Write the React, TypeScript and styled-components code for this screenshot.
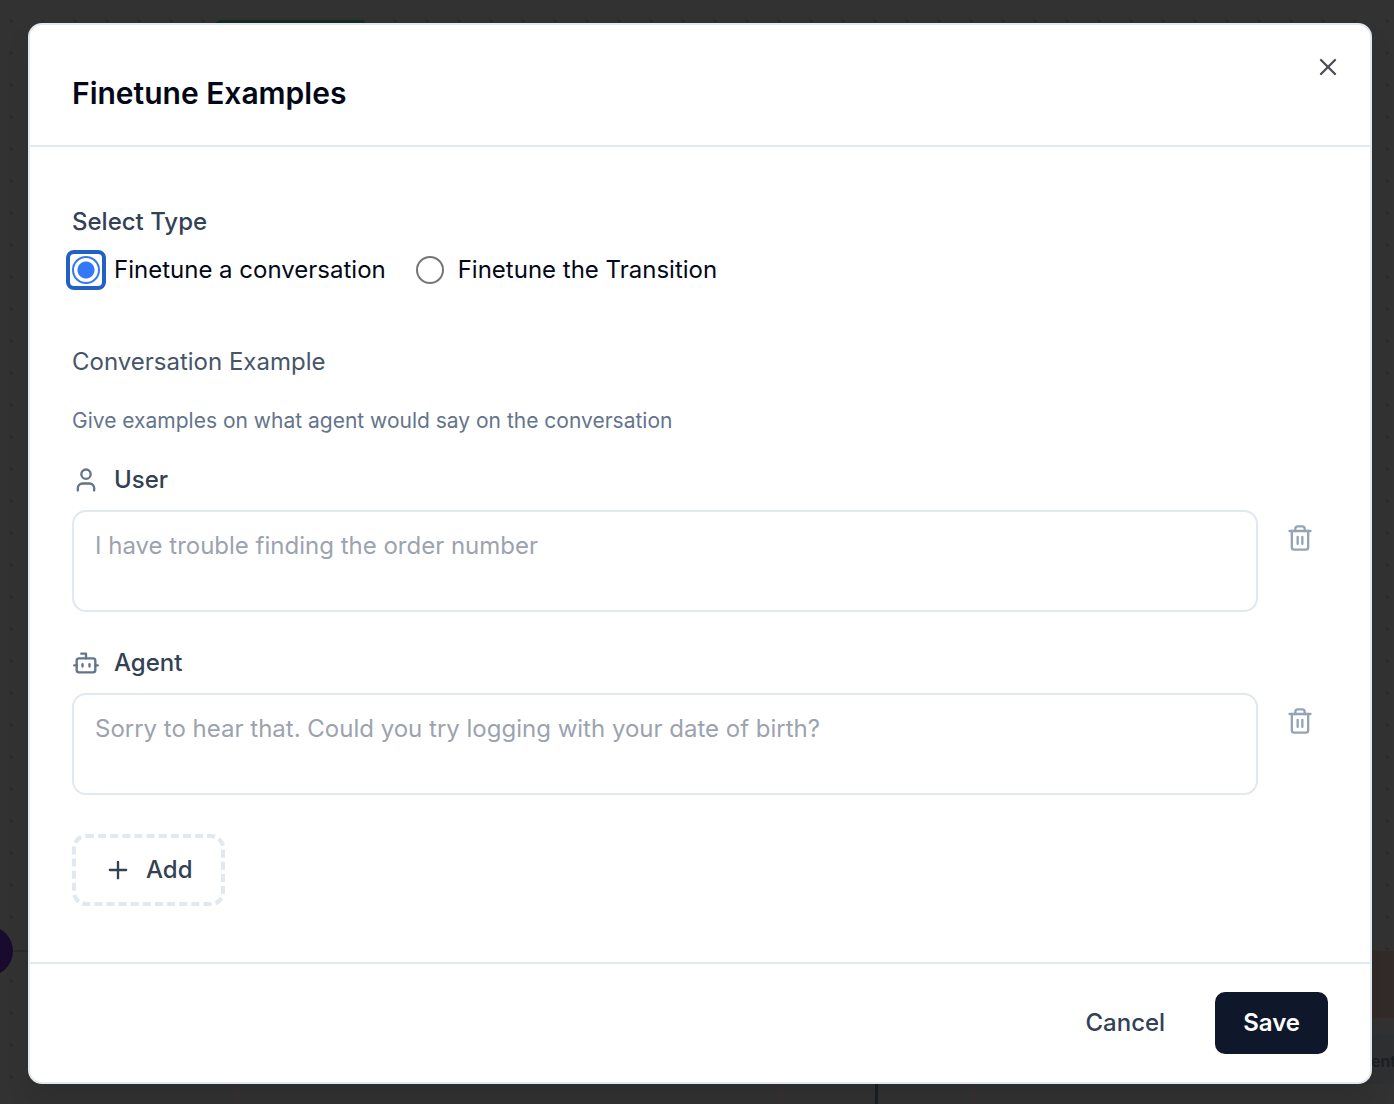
import React, { useState } from "react";
import styled, { createGlobalStyle } from "styled-components";
import { Bot, Plus, Trash2, User, X } from "lucide-react";

const GlobalStyle = createGlobalStyle`
  *, *::before, *::after { box-sizing: border-box; }
  body {
    margin: 0;
    background: #323232;
    color: #020817;
    font-family: Inter, "Liberation Sans", sans-serif;
    font-size: 24px;
    line-height: 36px;
  }
  button, input, textarea { font: inherit; color: inherit; margin: 0; }
  h2, h3, p, fieldset, legend { margin: 0; padding: 0; border: 0; }
`;

const Page = styled.div`
  position: relative;
  min-height: 100vh;
  display: flex;
  align-items: center;
  padding: 22px 22px 20px 28px;
  overflow: hidden;
`;

const FlowCanvas = styled.div`
  position: absolute;
  inset: 0;
  background-image: radial-gradient(circle, #2b2b2b 1px, transparent 2px);
  background-size: 32px 32px;
  background-position: -5px 5px;
`;

const Shape = styled.div<{ $x: number; $y: number; $w: number; $h: number; $color: string; $radius?: number }>`
  position: absolute;
  left: ${(p) => p.$x}px;
  top: ${(p) => p.$y}px;
  width: ${(p) => p.$w}px;
  height: ${(p) => p.$h}px;
  background: ${(p) => p.$color};
  border-radius: ${(p) => p.$radius ?? 0}px;
`;

const NodeLabel = styled.span`
  position: absolute;
  left: 1371px;
  top: 1049px;
  font-size: 16px;
  line-height: 24px;
  font-weight: 600;
  color: #1c1f22;
`;

const Dialog = styled.section`
  position: relative;
  flex: 1;
  min-width: 0;
  background: #fff;
  border: 2px solid #e2e8f0;
  border-radius: 14px;
  box-shadow: 0 16px 24px rgba(0, 0, 0, 0.1);
`;

const Header = styled.header`
  padding: 52px 42px 36px;
  border-bottom: 2px solid #e2e8f0;
`;

const Title = styled.h2`
  font-size: 30px;
  line-height: 32px;
  font-weight: 600;
`;

const IconButton = styled.button`
  display: flex;
  align-items: center;
  justify-content: center;
  flex: none;
  width: 56px;
  height: 56px;
  padding: 0;
  border: 0;
  background: none;
  color: #94a3b8;
  cursor: pointer;
`;

const CloseButton = styled(IconButton)`
  position: absolute;
  top: 14px;
  right: 14px;
  color: #4b4e57;
`;

const Body = styled.div`
  padding: 57px 42px 56px;
`;

const TypeGroup = styled.fieldset`
  min-width: 0;
  margin-bottom: 56px;
`;

const Legend = styled.legend`
  margin-bottom: 12px;
  color: #334155;
  font-weight: 500;
`;

const Options = styled.div`
  display: flex;
  flex-wrap: wrap;
  gap: 30px;
`;

const Option = styled.label`
  display: flex;
  align-items: center;
  gap: 14px;
`;

const RadioFrame = styled.span`
  display: flex;
  border-radius: 2px;

  &:has(input:checked) {
    outline: 4px solid #2360c5;
    outline-offset: 2px;
  }
`;

const Radio = styled.input`
  appearance: none;
  width: 28px;
  height: 28px;
  border: 2px solid #767676;
  border-radius: 50%;
  outline: none;

  &:checked {
    border-color: #3478f6;
    background: radial-gradient(circle, #3478f6 8px, #fff 9px);
  }
`;

const SectionTitle = styled.h3`
  margin-bottom: 27px;
  font-size: 24px;
  font-weight: 400;
  color: #475569;
`;

const Hint = styled.p`
  margin-bottom: 27px;
  font-size: 21px;
  line-height: 28px;
  color: #64748b;
`;

const Turn = styled.div`
  margin-bottom: 33px;
`;

const TurnLabel = styled.label`
  display: flex;
  align-items: center;
  gap: 14px;
  margin-bottom: 12px;
  font-weight: 500;
  color: #334155;

  svg { color: #64748b; }
`;

const TurnRow = styled.div`
  display: flex;
  align-items: flex-start;
  gap: 14px;
`;

const Message = styled.textarea`
  display: block;
  flex: 1;
  min-width: 0;
  height: 102px;
  padding: 16px 21px;
  border: 2px solid #e2e8f0;
  border-radius: 14px;
  background: #fff;
  resize: none;
  outline: none;

  &::placeholder { color: #9ca3af; opacity: 1; }
`;

const AddButton = styled.button`
  display: flex;
  align-items: center;
  gap: 14px;
  margin-top: 39px;
  padding: 14px 28px;
  border: 4px dashed #e2e8f0;
  border-radius: 14px;
  background: #fff;
  color: #334155;
  font-weight: 500;
  cursor: pointer;
`;

const Footer = styled.footer`
  display: flex;
  justify-content: flex-end;
  gap: 22px;
  padding: 28px 42px;
  border-top: 2px solid #e2e8f0;
`;

const ActionButton = styled.button<{ $primary?: boolean }>`
  padding: 13px 28px;
  border: 0;
  border-radius: 10px;
  background: ${(p) => (p.$primary ? "#0f172a" : "transparent")};
  color: ${(p) => (p.$primary ? "#fff" : "#334155")};
  font-weight: ${(p) => (p.$primary ? 600 : 500)};
  cursor: pointer;
`;

const turns = [
  { id: "user", name: "User", Icon: User, placeholder: "I have trouble finding the order number" },
  { id: "agent", name: "Agent", Icon: Bot, placeholder: "Sorry to hear that. Could you try logging with your date of birth?" },
];

const types = [
  { id: "conversation", name: "Finetune a conversation" },
  { id: "transition", name: "Finetune the Transition" },
];

export default function App() {
  const [type, setType] = useState("conversation");
  return (
    <Page>
      <GlobalStyle />
      <FlowCanvas aria-hidden="true">
        <Shape $x={215} $y={20} $w={151} $h={60} $color="#142b27" $radius={6} />
        <Shape $x={0} $y={950} $w={40} $h={2} $color="#292b2e" />
        <Shape $x={-37} $y={926} $w={50} $h={50} $color="#190b30" $radius={25} />
        <Shape $x={234} $y={1040} $w={2} $h={64} $color="#3b2f30" />
        <Shape $x={780} $y={1040} $w={2} $h={64} $color="#3b2f30" />
        <Shape $x={875} $y={1040} $w={3} $h={64} $color="#1c1f22" />
        <Shape $x={974} $y={1040} $w={2} $h={64} $color="#3b2f30" />
        <Shape $x={1360} $y={951} $w={40} $h={67} $color="#332b2a" />
        <Shape $x={1360} $y={1034} $w={40} $h={50} $color="#2e3032" />
        <NodeLabel>ent</NodeLabel>
      </FlowCanvas>
      <Dialog role="dialog" aria-labelledby="dialog-title">
        <Header>
          <Title id="dialog-title">Finetune Examples</Title>
        </Header>
        <CloseButton type="button" aria-label="Close">
          <X size={28} />
        </CloseButton>
        <Body>
          <TypeGroup>
            <Legend>Select Type</Legend>
            <Options>
              {types.map(({ id, name }) => (
                <Option key={id} htmlFor={id}>
                  <RadioFrame>
                    <Radio type="radio" name="type" id={id} checked={type === id} onChange={() => setType(id)} />
                  </RadioFrame>
                  {name}
                </Option>
              ))}
            </Options>
          </TypeGroup>
          <SectionTitle>Conversation Example</SectionTitle>
          <Hint>Give examples on what agent would say on the conversation</Hint>
          {turns.map(({ id, name, Icon, placeholder }) => (
            <Turn key={id}>
              <TurnLabel htmlFor={id}>
                <Icon size={28} />
                {name}
              </TurnLabel>
              <TurnRow>
                <Message id={id} placeholder={placeholder} />
                <IconButton type="button" aria-label={`Delete ${name} example`}>
                  <Trash2 size={28} />
                </IconButton>
              </TurnRow>
            </Turn>
          ))}
          <AddButton type="button">
            <Plus size={28} />
            Add
          </AddButton>
        </Body>
        <Footer>
          <ActionButton type="button">Cancel</ActionButton>
          <ActionButton type="button" $primary>Save</ActionButton>
        </Footer>
      </Dialog>
    </Page>
  );
}
